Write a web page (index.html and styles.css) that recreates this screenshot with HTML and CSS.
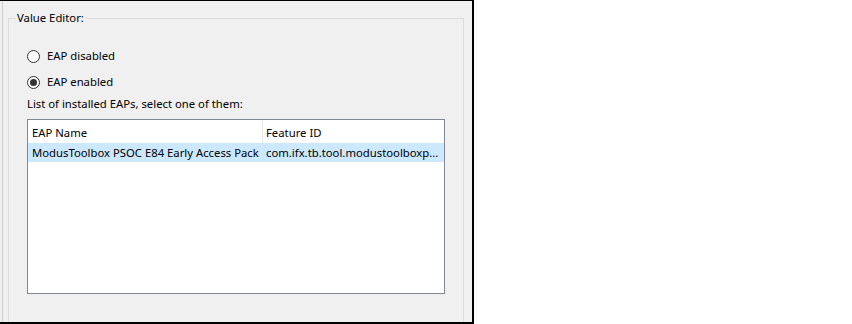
FILE: index.html
```html
<!DOCTYPE html>
<html lang="en">
<head>
    <meta charset="UTF-8">
    <title>Value Editor</title>
    <link rel="stylesheet" href="styles.css">
</head>
<body>

    <div class="window">
        <div class="frame">
            <fieldset class="group">
                <legend>Value Editor:</legend>
                <div class="group-body">
                    <!-- EAP switch -->
                    <label class="radio"><span class="dot"></span>EAP disabled</label>
                    <label class="radio checked"><span class="dot"></span>EAP enabled</label>

                    <p class="hint">List of installed EAPs, select one of them:</p>

                    <!-- list of installed packs -->
                    <div class="list">
                        <div class="row head">
                            <div class="cell name">EAP Name</div>
                            <div class="cell feature">Feature ID</div>
                        </div>
                        <div class="row selected">
                            <div class="cell name">ModusToolbox PSOC E84 Early Access Pack</div>
                            <div class="cell feature">com.ifx.tb.tool.modustoolboxp...</div>
                        </div>
                    </div>
                </div>
            </fieldset>
        </div>
    </div>

</body>
</html>
```

FILE: styles.css
```css
body {
    margin: 0;
    background: #fff;
    font-family: "Noto Sans", sans-serif;
    font-size: 11.3px;
    color: #000;
}
.window {
    width: 470px;
    height: 321px;
    padding-left: 2px;
    background: #f0f0f0;
    border-top: 1px solid #000;
    border-right: 2px solid #000;
    border-bottom: 2px solid #000;
    overflow: hidden;
}
.frame {
    height: 100%;
    box-sizing: border-box;
    border-left: 1px solid #cfcfcf;
    padding-left: 5px;
    padding-top: 9px;
}
.group {
    width: 456px;
    height: 400px;
    box-sizing: border-box;
    margin: 0;
    padding: 0 0 0 7px;
    border: 1px solid #dcdcdc;
    min-width: 0;
}
.group legend {
    padding: 0 2px 0 1px;
    line-height: 16px;
}
.group-body {
    padding: 17px 0 0 11px;
}
.radio {
    display: flex;
    align-items: center;
    height: 26px;
    line-height: 16px;
}
.dot {
    flex: none;
    width: 13px;
    height: 13px;
    box-sizing: border-box;
    margin-right: 7px;
    border: 1px solid #333;
    border-radius: 50%;
    background: #fff;
    display: flex;
    align-items: center;
    justify-content: center;
}
.checked .dot::after {
    content: "";
    width: 7px;
    height: 7px;
    border-radius: 50%;
    background: #333;
}
.hint {
    margin: 0;
    line-height: 18px;
}
.list {
    width: 418px;
    height: 175px;
    box-sizing: border-box;
    margin-top: 6px;
    border: 1px solid #828790;
    background: #fff;
}
.row {
    display: flex;
    white-space: nowrap;
}
.cell {
    box-sizing: border-box;
    overflow: hidden;
}
.cell.name {
    width: 235px;
    padding-left: 4px;
}
.cell.feature {
    flex: 1;
    padding-left: 3px;
}
.head {
    height: 23px;
}
.head .cell {
    padding-top: 2px;
    line-height: 21px;
}
.head .name {
    border-right: 1px solid #e5e5e5;
}
.selected {
    height: 19px;
    line-height: 19px;
    background: #cce8ff;
}
```
